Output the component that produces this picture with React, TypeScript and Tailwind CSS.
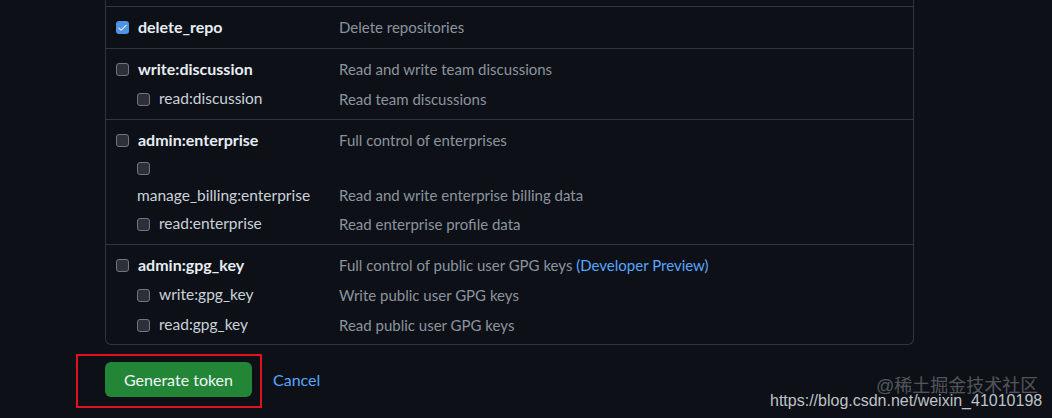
import React from "react";

type Scope = {
  name: string;
  desc?: React.ReactNode;
  checked?: boolean;
  wrap?: boolean;
};

type Group = {
  top: Scope;
  subs: Scope[];
};

const groups: Group[] = [
  { top: { name: "delete_repo", desc: "Delete repositories", checked: true }, subs: [] },
  {
    top: { name: "write:discussion", desc: "Read and write team discussions" },
    subs: [{ name: "read:discussion", desc: "Read team discussions" }],
  },
  {
    top: { name: "admin:enterprise", desc: "Full control of enterprises" },
    subs: [
      { name: "manage_billing:enterprise", desc: "Read and write enterprise billing data", wrap: true },
      { name: "read:enterprise", desc: "Read enterprise profile data" },
    ],
  },
  {
    top: {
      name: "admin:gpg_key",
      desc: (
        <>
          Full control of public user GPG keys <span className="text-[#58a6ff]">(Developer Preview)</span>
        </>
      ),
    },
    subs: [
      { name: "write:gpg_key", desc: "Write public user GPG keys" },
      { name: "read:gpg_key", desc: "Read public user GPG keys" },
    ],
  },
];

const Checkbox = ({ checked }: { checked?: boolean }) =>
  checked ? (
    <span className="flex h-[13px] w-[13px] shrink-0 items-center justify-center rounded-[3px] bg-[#4f94e4]">
      <svg viewBox="0 0 16 16" className="h-[11px] w-[11px]" fill="#f0f6fc">
        <path d="M13.78 4.22a.75.75 0 0 1 0 1.06l-7.25 7.25a.75.75 0 0 1-1.06 0L2.22 9.28a.75.75 0 0 1 1.06-1.06L6 10.94l6.72-6.72a.75.75 0 0 1 1.06 0Z" />
      </svg>
    </span>
  ) : (
    <span className="block h-[13px] w-[13px] shrink-0 rounded-[3px] border border-[#6e7681] bg-[#2d3036]" />
  );

const ScopeRow = ({ scope, sub }: { scope: Scope; sub?: boolean }) => {
  if (scope.wrap) {
    return (
      <div className="grid grid-cols-[223px_1fr]">
        <div className="pl-[21px]">
          <div className="flex h-[27px] items-center">
            <Checkbox />
          </div>
          <div className="flex h-[27px] items-center text-[15.5px] text-[#c9d1d9]">{scope.name}</div>
        </div>
        <div className="flex h-[54px] items-end">
          <div className="flex h-[27px] items-center text-[#8b949e]">{scope.desc}</div>
        </div>
      </div>
    );
  }
  return (
    <div className="grid h-[30px] grid-cols-[223px_1fr] items-center">
      <div
        className={`flex items-center gap-[9px] ${
          sub ? "pl-[21px] text-[15.5px] text-[#c9d1d9]" : "text-[16px] font-bold text-[#e6edf3]"
        }`}
      >
        <Checkbox checked={scope.checked} />
        <span>{scope.name}</span>
      </div>
      <div className="text-[#8b949e]">{scope.desc}</div>
    </div>
  );
};

export default function App() {
  return (
    <div
      className="relative h-[418px] w-[1052px] overflow-hidden bg-[#0d1117] text-[15px]"
      style={{ fontFamily: "Lato, 'Noto Sans', sans-serif" }}
    >
      <div className="ml-[105px] w-[809px] rounded-b-[6px] border border-t-0 border-[#30363d]">
        {/* tail of the previous scope group, scrolled out of view */}
        <div className="h-[7px] border-b border-[#30363d]" />
        {groups.map((g, i) => (
          <div
            key={g.top.name}
            className={`border-b border-[#30363d] pl-[10px] last:border-b-0 ${
              i === 0 ? "pt-[5px] pb-[6px]" : i === groups.length - 1 ? "pt-[5px] pb-[4px]" : "py-[5px]"
            }`}
          >
            <ScopeRow scope={g.top} />
            {g.subs.map((s) => (
              <ScopeRow key={s.name} scope={s} sub />
            ))}
          </div>
        ))}
      </div>

      <div className="ml-[105px] mt-[17px] flex items-center gap-[21px]">
        <div className="relative">
          <button className="h-[35px] w-[147px] rounded-[6px] bg-[#238636] text-[16px] text-[#f0f6fc]">
            Generate token
          </button>
          <span className="pointer-events-none absolute -bottom-[11px] -left-[29px] -right-[10px] -top-[8px] border-2 border-[#e3101d]" />
        </div>
        <a className="text-[16px] text-[#58a6ff]">Cancel</a>
      </div>

      <div
        className="absolute left-[770px] top-[389px] text-[16px] text-[#bfc2c6]"
        style={{ fontFamily: "'Liberation Sans', Arial, sans-serif" }}
      >
        https://blog.csdn.net/weixin_41010198
      </div>
      <div
        className="absolute left-[876px] top-[373px] text-[18px] text-[#ffffff]/30"
        style={{ fontFamily: "'Liberation Sans', 'Noto Sans CJK SC', sans-serif" }}
      >
        @稀土掘金技术社区
      </div>
    </div>
  );
}
